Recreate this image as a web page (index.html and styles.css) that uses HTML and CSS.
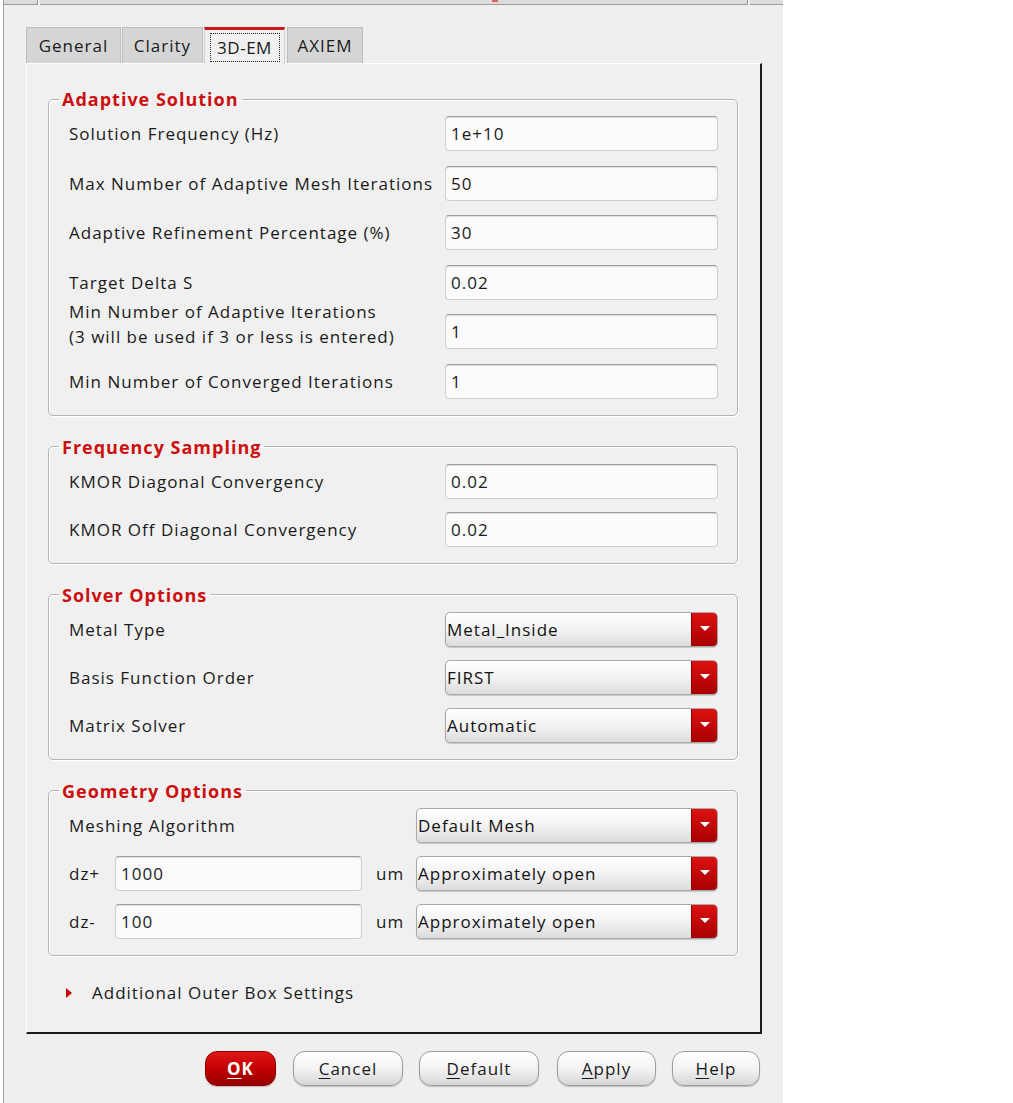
FILE: index.html
```html
<!DOCTYPE html>
<html>
<head>
<meta charset="utf-8">
<link rel="stylesheet" href="styles.css">
</head>
<body>
<div class="window">
  <div class="topstrip">
    <div class="strip-cell c1"></div>
    <div class="strip-cell c2"><span class="redmark"></span></div>
    <div class="strip-cell c3"></div>
  </div>
  <div class="main">
    <div class="tabs">
      <div class="tab t-general">General</div>
      <div class="tab t-clarity">Clarity</div>
      <div class="tab tab-active t-3dem"><span class="focus">3D-EM</span></div>
      <div class="tab t-axiem">AXIEM</div>
    </div>
    <div class="panel">
      <fieldset class="group">
        <legend>Adaptive Solution</legend>
        <div class="rows rows-wide">
          <div class="label">Solution Frequency (Hz)</div>
          <div class="input">1e+10</div>
          <div class="label">Max Number of Adaptive Mesh Iterations</div>
          <div class="input">50</div>
          <div class="label">Adaptive Refinement Percentage (%)</div>
          <div class="input">30</div>
          <div class="label">Target Delta S</div>
          <div class="input">0.02</div>
          <div class="label label-two">Min Number of Adaptive Iterations<br>(3 will be used if 3 or less is entered)</div>
          <div class="input">1</div>
          <div class="label">Min Number of Converged Iterations</div>
          <div class="input">1</div>
        </div>
      </fieldset>
      <fieldset class="group">
        <legend>Frequency Sampling</legend>
        <div class="rows">
          <div class="label">KMOR Diagonal Convergency</div>
          <div class="input">0.02</div>
          <div class="label">KMOR Off Diagonal Convergency</div>
          <div class="input">0.02</div>
        </div>
      </fieldset>
      <fieldset class="group">
        <legend>Solver Options</legend>
        <div class="rows">
          <div class="label">Metal Type</div>
          <div class="select"><span class="sel-text">Metal_Inside</span><span class="sel-arrow"></span></div>
          <div class="label">Basis Function Order</div>
          <div class="select"><span class="sel-text">FIRST</span><span class="sel-arrow"></span></div>
          <div class="label">Matrix Solver</div>
          <div class="select"><span class="sel-text">Automatic</span><span class="sel-arrow"></span></div>
        </div>
      </fieldset>
      <fieldset class="group">
        <legend>Geometry Options</legend>
        <div class="geo">
          <div class="label geo-span">Meshing Algorithm</div>
          <div class="select"><span class="sel-text">Default Mesh</span><span class="sel-arrow"></span></div>
          <div class="label">dz+</div>
          <div class="input">1000</div>
          <div class="label unit">um</div>
          <div class="select"><span class="sel-text">Approximately open</span><span class="sel-arrow"></span></div>
          <div class="label">dz-</div>
          <div class="input">100</div>
          <div class="label unit">um</div>
          <div class="select"><span class="sel-text">Approximately open</span><span class="sel-arrow"></span></div>
        </div>
      </fieldset>
      <div class="expander">
        <span class="tri"></span>
        <span class="exp-text">Additional Outer Box Settings</span>
      </div>
    </div>
    <div class="buttons">
      <div class="btn btn-ok"><u>O</u>K</div>
      <div class="btn btn-cancel"><u>C</u>ancel</div>
      <div class="btn btn-default"><u>D</u>efault</div>
      <div class="btn btn-apply"><u>A</u>pply</div>
      <div class="btn btn-help"><u>H</u>elp</div>
    </div>
  </div>
</div>
</body>
</html>
```
FILE: styles.css
```css
html, body {
  margin: 0;
  padding: 0;
  background: #ffffff;
}
body {
  font-family: "Open Sans", "DejaVu Sans", sans-serif;
  font-size: 17px;
  letter-spacing: 1px;
  color: #1a1a1a;
}
.window {
  width: 780px;
  height: 1103px;
  margin-left: 3px;
  box-sizing: border-box;
  border-left: 1px solid #a4a4a4;
  background: #efefef;
  overflow: hidden;
}
.topstrip {
  display: flex;
  height: 5px;
  gap: 2px;
}
.strip-cell {
  height: 4px;
  background: #dcdcdc;
  border-bottom: 1px solid #9a9a9a;
  border-right: 1px solid #9a9a9a;
  position: relative;
}
.c1 { width: 33px; }
.c2 { width: 707px; }
.c3 { flex: 1; border-right: none; }
.redmark {
  position: absolute;
  left: 452px;
  top: 0;
  width: 6px;
  height: 2px;
  background: #e06060;
}
.main {
  padding-left: 22px;
}
.tabs {
  display: flex;
  margin-top: 22px;
  height: 36px;
  align-items: flex-end;
}
.tab {
  box-sizing: border-box;
  height: 36px;
  background: #d5d5d5;
  border: 1px solid #bdbdbd;
  border-bottom: none;
  display: flex;
  align-items: center;
  justify-content: center;
  margin-right: 1px;
  color: #1a1a1a;
}
.t-general { width: 95px; }
.t-clarity { width: 81px; }
.t-3dem { width: 81px; margin-right: 2px; }
.t-axiem { width: 76px; }
.tab-active {
  background: #f0f0f0;
  border-top: 3px solid #cc1a1a;
  border-left: 1px solid #d0d0d0;
  border-right: 1px solid #d0d0d0;
  height: 37px;
  margin-bottom: -1px;
  position: relative;
  z-index: 1;
}
.focus {
  border: 1px dotted #222;
  height: 29px;
  line-height: 27px;
  box-sizing: border-box;
  display: block;
  width: 70px;
  text-align: center;
  margin-top: 1px;
  letter-spacing: 0.5px;
}
.panel {
  width: 736px;
  box-sizing: border-box;
  border-top: 1px solid #ffffff;
  border-left: 1px solid #ffffff;
  border-right: 2px solid #1c1c1c;
  border-bottom: 2px solid #1c1c1c;
  background: #f0f0f0;
  padding: 23px 22px 27px 21px;
  display: flex;
  flex-direction: column;
}
.group {
  margin: 19px 0 0 0;
  border: 1px solid #b4b4b4;
  border-radius: 5px;
  padding: 5px 19px 16px 20px;
  box-shadow: inset 1px 1px 0 #ffffff, 1px 1px 0 #ffffff;
  min-width: 0;
}
.group:first-child {
  margin-top: 0;
}
legend {
  color: #cc0f0f;
  font-weight: bold;
  font-size: 18px;
  line-height: 24px;
  padding: 0 3px;
  margin-left: -10px;
  letter-spacing: 1px;
}
.rows {
  display: grid;
  grid-template-columns: 1fr 273px;
  row-gap: 13px;
  align-items: center;
}
.rows-wide {
  row-gap: 14.6px;
}
.label {
  line-height: 25px;
  white-space: nowrap;
}
.label-two {
  margin-top: -16px;
}
.input {
  box-sizing: border-box;
  height: 35px;
  background: #fbfbfb;
  border: 1px solid #cfcfcf;
  border-top-color: #9c9c9c;
  border-radius: 4px;
  box-shadow: inset 0 1px 1px rgba(0,0,0,0.12);
  padding: 0 5px;
  line-height: 33px;
  color: #1a1a1a;
}
.select {
  box-sizing: border-box;
  height: 35px;
  display: flex;
  align-items: stretch;
  border: 1px solid #a8a8a8;
  border-radius: 5px;
  background: linear-gradient(#ffffff 0%, #f4f4f4 45%, #dcdcdc 100%);
  box-shadow: 0 1px 1px rgba(0,0,0,0.18);
  overflow: hidden;
}
.sel-text {
  flex: 1;
  padding-left: 1px;
  line-height: 33px;
  color: #111;
}
.sel-arrow {
  width: 25px;
  background: linear-gradient(#dd1111, #a80000);
  border-left: 1px solid #900000;
  display: flex;
  align-items: center;
  justify-content: center;
}
.sel-arrow::after {
  content: "";
  width: 0;
  height: 0;
  border-left: 5px solid transparent;
  border-right: 5px solid transparent;
  border-top: 5px solid #ffffff;
  margin-top: -1px;
}
.geo {
  display: grid;
  grid-template-columns: 46px 247px 54px 302px;
  row-gap: 13px;
  align-items: center;
}
.geo-span {
  grid-column: 1 / 4;
}
.unit {
  padding-left: 14px;
}
.expander {
  display: flex;
  align-items: center;
  margin-top: 25px;
  line-height: 24px;
  padding-left: 18px;
}
.tri {
  width: 0;
  height: 0;
  border-top: 5px solid transparent;
  border-bottom: 5px solid transparent;
  border-left: 6px solid #c80000;
  margin-right: 20px;
}
.buttons {
  width: 736px;
  display: flex;
  justify-content: flex-end;
  margin-top: 17px;
}
.btn {
  box-sizing: border-box;
  height: 35px;
  border-radius: 12px;
  border: 1px solid #9b9b9b;
  background: linear-gradient(#ffffff 0%, #f3f3f3 50%, #d6d6d6 100%);
  box-shadow: 0 1px 1px rgba(0,0,0,0.2);
  display: flex;
  align-items: center;
  justify-content: center;
  color: #1a1a1a;
}
.btn u {
  text-decoration-thickness: 1px;
  text-underline-offset: 3px;
}
.btn-ok {
  width: 71px;
  margin-right: 17px;
  background: linear-gradient(#e01818 0%, #c20000 50%, #960000 100%);
  border-color: #8a0000;
  color: #ffffff;
  font-weight: bold;
}
.btn-cancel { width: 110px; margin-right: 16px; }
.btn-default { width: 120px; margin-right: 18px; }
.btn-apply { width: 99px; margin-right: 16px; }
.btn-help { width: 88px; margin-right: 2px; }
```
